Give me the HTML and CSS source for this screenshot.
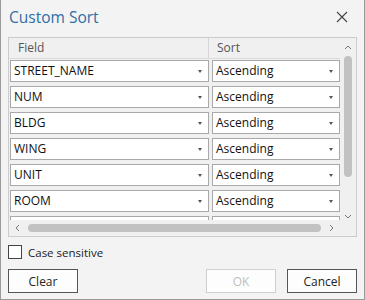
FILE: index.html
```html
<!DOCTYPE html>
<html lang="en">
<head>
    <meta charset="UTF-8">
    <title>Custom Sort</title>
    <link rel="stylesheet" href="styles.css">
</head>
<body>
    <div class="dialog">
        <div class="titlebar">
            <span class="title">Custom Sort</span>
            <svg class="close" width="12" height="12" viewBox="0 0 12 12"><path d="M1 1 L11 11 M11 1 L1 11" stroke="#444" stroke-width="1.1" fill="none"/></svg>
        </div>
        <div class="grid">
            <div class="grid-main">
                <div class="grid-header">
                    <div class="col-field">Field</div>
                    <div class="col-sort">Sort</div>
                </div>
                <div class="rows">
                    <div class="row"><div class="combo field">STREET_NAME<span class="arrow"></span></div><div class="combo sort">Ascending<span class="arrow"></span></div></div>
                    <div class="row"><div class="combo field">NUM<span class="arrow"></span></div><div class="combo sort">Ascending<span class="arrow"></span></div></div>
                    <div class="row"><div class="combo field">BLDG<span class="arrow"></span></div><div class="combo sort">Ascending<span class="arrow"></span></div></div>
                    <div class="row"><div class="combo field">WING<span class="arrow"></span></div><div class="combo sort">Ascending<span class="arrow"></span></div></div>
                    <div class="row"><div class="combo field">UNIT<span class="arrow"></span></div><div class="combo sort">Ascending<span class="arrow"></span></div></div>
                    <div class="row"><div class="combo field">ROOM<span class="arrow"></span></div><div class="combo sort">Ascending<span class="arrow"></span></div></div>
                    <div class="row"><div class="combo field"></div><div class="combo sort"></div></div>
                </div>
                <div class="hscroll">
                    <svg width="8" height="8" viewBox="0 0 8 8"><path d="M5 1 L2 4 L5 7" stroke="#777" fill="none"/></svg>
                    <div class="hthumb"></div>
                    <svg width="8" height="8" viewBox="0 0 8 8"><path d="M3 1 L6 4 L3 7" stroke="#777" fill="none"/></svg>
                </div>
            </div>
            <div class="vscroll">
                <svg width="8" height="8" viewBox="0 0 8 8"><path d="M1 5 L4 2 L7 5" stroke="#777" fill="none"/></svg>
                <div class="vtrack"><div class="vthumb"></div></div>
                <svg width="8" height="8" viewBox="0 0 8 8"><path d="M1 3 L4 6 L7 3" stroke="#777" fill="none"/></svg>
                <div class="corner"></div>
            </div>
        </div>
        <label class="check">
            <span class="box"></span>
            Case sensitive
        </label>
        <div class="buttons">
            <button class="btn">Clear</button>
            <span class="spacer"></span>
            <button class="btn" disabled>OK</button>
            <button class="btn">Cancel</button>
        </div>
    </div>
</body>
</html>
```

FILE: styles.css
```css
body {
    margin: 0;
    font-family: "Open Sans", "Noto Sans", sans-serif;
    font-size: 12px;
    color: #222;
}
.dialog {
    width: 365px;
    height: 300px;
    box-sizing: border-box;
    border: 1px solid #9a9a9a;
    border-top: none;
    background: #f3f3f3;
    padding: 0 7px;
}
.titlebar {
    height: 37px;
    display: flex;
    align-items: center;
    justify-content: space-between;
    padding: 0 9px 0 1px;
}
.title {
    font-size: 15.5px;
    color: #2f6ea6;
    margin-top: -4px;
}
.close {
    margin-top: -4px;
}
.grid {
    height: 200px;
    box-sizing: border-box;
    border: 1px solid #cbcbcb;
    display: flex;
    background: #f0f0f0;
}
.grid-main {
    width: 332px;
    display: flex;
    flex-direction: column;
}
.grid-header {
    height: 20px;
    display: flex;
    border-bottom: 1px solid #dcdcdc;
    color: #555;
    flex-shrink: 0;
}
.col-field {
    width: 190px;
    padding-left: 9px;
    border-right: 1px solid #d6d6d6;
    line-height: 20px;
}
.col-sort {
    padding-left: 8px;
    line-height: 20px;
}
.rows {
    flex: 1;
    overflow: hidden;
    padding: 1px 0 0 1px;
}
.row {
    display: flex;
    gap: 3px;
    margin-bottom: 4px;
}
.combo {
    height: 22px;
    box-sizing: border-box;
    border: 1px solid #a9a9a9;
    background: #fff;
    padding-left: 3px;
    line-height: 20px;
    position: relative;
    color: #111;
}
.combo.field {
    width: 199px;
}
.combo.sort {
    width: 128px;
}
.arrow {
    position: absolute;
    right: 6px;
    top: 9px;
    border-left: 2.5px solid transparent;
    border-right: 2.5px solid transparent;
    border-top: 3px solid #555;
}
.hscroll {
    height: 16px;
    display: flex;
    align-items: center;
    gap: 6px;
    padding: 0 5px;
    flex-shrink: 0;
}
.hthumb {
    flex: 1;
    height: 8px;
    border-radius: 4px;
    background: #c2c2c2;
}
.vscroll {
    width: 17px;
    display: flex;
    flex-direction: column;
    align-items: center;
    padding-top: 6px;
    background: #f0f0f0;
}
.vtrack {
    flex: 1;
    padding: 4px 0;
}
.vthumb {
    width: 8px;
    height: 121px;
    border-radius: 4px;
    background: #c2c2c2;
}
.corner {
    height: 16px;
}
.check {
    display: flex;
    align-items: center;
    gap: 6px;
    margin-top: 7px;
    height: 16px;
    font-size: 11.5px;
}
.box {
    width: 12px;
    height: 12px;
    border: 1px solid #444;
    background: #fff;
}
.buttons {
    display: flex;
    gap: 11px;
    margin-top: 9px;
}
.spacer {
    flex: 1;
}
.btn {
    width: 70px;
    height: 24px;
    font-family: inherit;
    font-size: 12px;
    background: #fdfdfd;
    border: 1px solid #555;
    color: #222;
    padding: 0;
}
.btn:disabled {
    border-color: #cfcfcf;
    color: #bdbdbd;
}
```
